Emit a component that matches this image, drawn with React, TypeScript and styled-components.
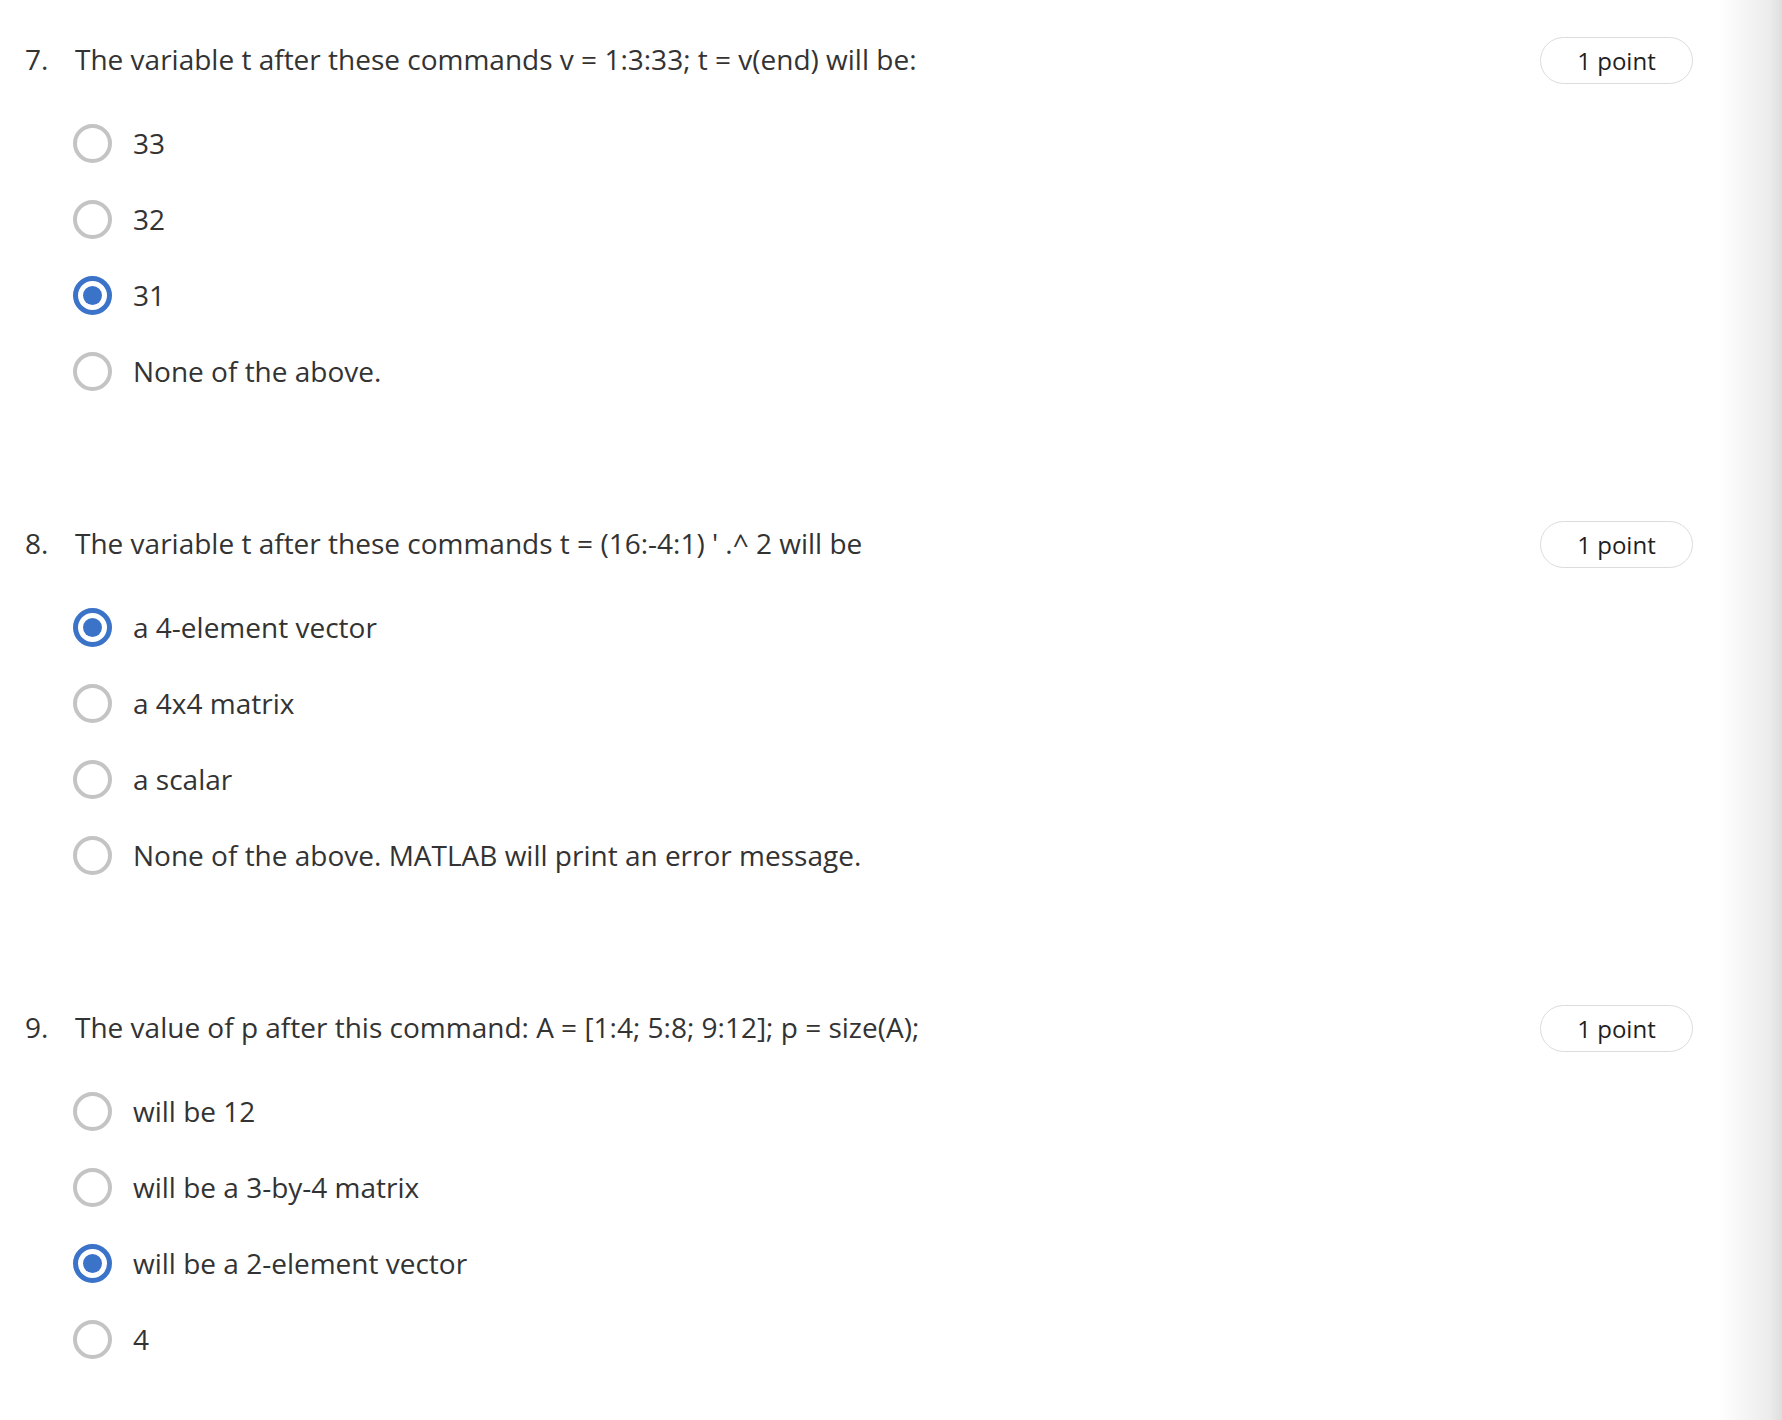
import React from "react";
import styled, { createGlobalStyle } from "styled-components";

const Global = createGlobalStyle`
  html, body { margin: 0; padding: 0; background: #ffffff; }
  body { font-family: "Open Sans", "Noto Sans", sans-serif; color: #333333; }
`;

const Page = styled.div`
  display: flex;
  width: 1782px;
  min-height: 1420px;
  background: #ffffff;
`;

const Main = styled.main`
  flex: 1;
  padding: 37px 25px 0 25px;
  display: flex;
  flex-direction: column;
  gap: 112px;
`;

const Shade = styled.div`
  width: 64px;
  background: linear-gradient(to right, #ffffff 0%, #f7f7f7 35%, #ececec 80%, #dedede 100%);
`;

const Question = styled.section`
  display: flex;
  flex-direction: column;
  gap: 21px;
`;

const Header = styled.div`
  display: flex;
  align-items: center;
  height: 47px;
`;

const Number = styled.span`
  width: 50px;
  flex: none;
  font-size: 28px;
  color: #333333;
  margin-top: -3px;
`;

const Prompt = styled.span`
  flex: 1;
  font-size: 28px;
  color: #333333;
  margin-top: -3px;
`;

const Badge = styled.span`
  flex: none;
  width: 153px;
  height: 47px;
  box-sizing: border-box;
  border: 1.5px solid #dcdcdc;
  border-radius: 24px;
  display: flex;
  align-items: center;
  justify-content: center;
  font-size: 24px;
  color: #1f1f1f;
`;

const Options = styled.div`
  display: flex;
  flex-direction: column;
  padding-left: 48px;
`;

const Option = styled.label`
  display: flex;
  align-items: center;
  height: 76px;
  gap: 21px;
`;

const Radio = styled.span<{ $checked: boolean }>`
  width: 39px;
  height: 39px;
  box-sizing: border-box;
  border-radius: 50%;
  flex: none;
  border: ${(p) => (p.$checked ? "5px solid #3b73c8" : "4px solid #c4c4c4")};
  display: flex;
  align-items: center;
  justify-content: center;
  &::after {
    content: "";
    display: ${(p) => (p.$checked ? "block" : "none")};
    width: 19px;
    height: 19px;
    border-radius: 50%;
    background: #3b73c8;
  }
`;

const OptionText = styled.span`
  font-size: 28px;
  color: #333333;
`;

type Q = { n: number; text: string; options: string[]; selected: number };

const questions: Q[] = [
  {
    n: 7,
    text: "The variable t after these commands v = 1:3:33; t = v(end) will be:",
    options: ["33", "32", "31", "None of the above."],
    selected: 2,
  },
  {
    n: 8,
    text: "The variable t after these commands t = (16:-4:1) ' .^ 2 will be",
    options: [
      "a 4-element vector",
      "a 4x4 matrix",
      "a scalar",
      "None of the above. MATLAB will print an error message.",
    ],
    selected: 0,
  },
  {
    n: 9,
    text: "The value of p after this command: A = [1:4; 5:8; 9:12]; p = size(A);",
    options: ["will be 12", "will be a 3-by-4 matrix", "will be a 2-element vector", "4"],
    selected: 2,
  },
];

export default function App() {
  return (
    <Page>
      <Global />
      <Main>
        {questions.map((q) => (
          <Question key={q.n}>
            <Header>
              <Number>{q.n}.</Number>
              <Prompt>{q.text}</Prompt>
              <Badge>1 point</Badge>
            </Header>
            <Options>
              {q.options.map((o, i) => (
                <Option key={o}>
                  <Radio $checked={i === q.selected} />
                  <OptionText>{o}</OptionText>
                </Option>
              ))}
            </Options>
          </Question>
        ))}
      </Main>
      <Shade />
    </Page>
  );
}
